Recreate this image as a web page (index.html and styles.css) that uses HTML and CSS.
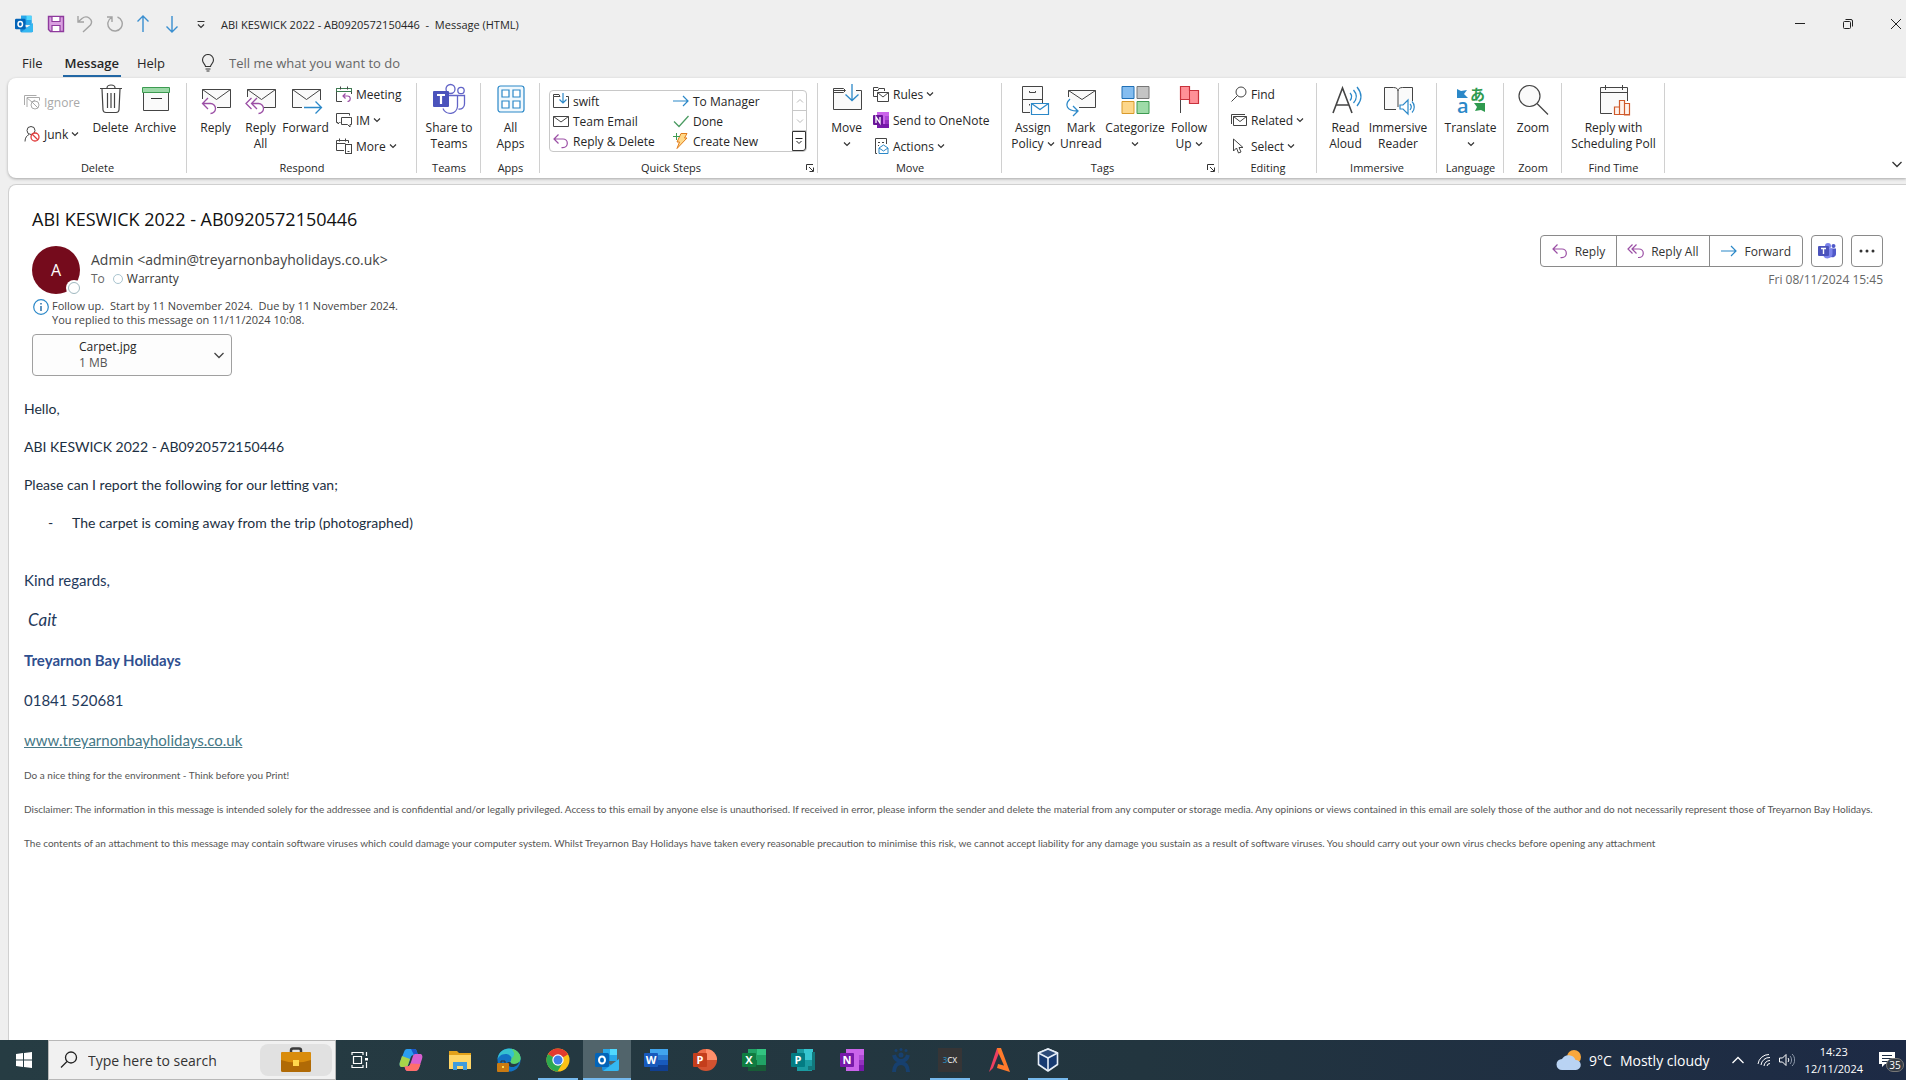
FILE: index.html
```html
<!DOCTYPE html>
<html lang="en">
<head>
    <meta charset="UTF-8">
    <meta name="viewport" content="width=device-width, initial-scale=1.0">
    <link rel="stylesheet" href="styles.css">
    <title>ABI KESWICK 2022 - AB0920572150446 - Message (HTML)</title>
</head>
<body>
    <!-- shared icons -->
    <svg class="sprite" aria-hidden="true">
        <symbol id="chev" viewBox="0 0 8 8"><path d="M1 2.5l3 3 3-3" fill="none" stroke="#333" stroke-width="1.2"/></symbol>
        <symbol id="reply" viewBox="0 0 16 16"><path d="M5.500 1.500L1 6l4.500 4.500M1 6h9a4.300 4.300 0 0 1 0 8.600H8.500" fill="none" stroke="#9b4fa5" stroke-width="1.200"/></symbol>
        <symbol id="replyall" viewBox="0 0 16 16"><path d="M4.500 1.500L0 6l4.500 4.500M8.500 1.500L4 6l4.500 4.500M4 6h7a4.200 4.200 0 0 1 0 8.500h-1" fill="none" stroke="#9b4fa5" stroke-width="1.200"/></symbol>
        <symbol id="arrow" viewBox="0 0 16 16"><path d="M0 8h15M10 3l5 5-5 5" fill="none" stroke="#2b88c8" stroke-width="1.200"/></symbol>
        <symbol id="launch" viewBox="0 0 8 8"><path d="M.5 6V.5H7M3 3l4 4M7.500 3.500v4h-4" fill="none" stroke="#333"/></symbol>
        <symbol id="outlook" viewBox="0 0 24 24"><path d="M8 1h14v12H8z" fill="#1490df"/><path d="M15 1h7v6h-7z" fill="#50d9ff"/><path d="M8 1h7v6H8z" fill="#28a8ea"/><path d="M15 7h7v6h-7z" fill="#28a8ea"/><path d="M7 11l9 6 8-6v10a2 2 0 0 1-2 2H9a2 2 0 0 1-2-2z" fill="#1a8fdd"/><path d="M24 11L8 23h14a2 2 0 0 0 2-2z" fill="#35b8f1"/><rect x="0" y="5" width="14" height="14" rx="1.500" fill="#0364b8"/><ellipse cx="7" cy="12" rx="3" ry="3.500" fill="none" stroke="#fff" stroke-width="2"/></symbol>
    </svg>

    <header class="titlebar">
        <div class="quick">
            <svg width="18" height="18"><use href="#outlook"/></svg>
            <button aria-label="Save"><svg width="18" height="18" viewBox="0 0 18 18"><path d="M1.500 1.500h15v15h-13l-2-2z" fill="#d9a0e0" stroke="#8e3a9d" stroke-width="1.400"/><path d="M5 1.500h8v5H5zM5 10.500h8v6H5z" fill="#fff" stroke="#8e3a9d" stroke-width="1.200"/></svg></button>
            <button aria-label="Undo"><svg width="18" height="18" viewBox="0 0 18 18"><path d="M2 1v6h6M2 7l4-3.500c5-4 12 1 8.500 6.500L7 17" fill="none" stroke="#a3a3a3" stroke-width="1.400"/></svg></button>
            <button aria-label="Redo"><svg width="18" height="18" viewBox="0 0 18 18"><path d="M2 2h5v5M6.500 2.500a7.200 7.200 0 1 0 6-.5" fill="none" stroke="#a3a3a3" stroke-width="1.400"/></svg></button>
            <button aria-label="Previous item"><svg width="18" height="18" viewBox="0 0 18 18"><path d="M9 17V1M3.500 6.500L9 1l5.500 5.500" fill="none" stroke="#3a8fd0" stroke-width="1.400"/></svg></button>
            <button aria-label="Next item"><svg width="18" height="18" viewBox="0 0 18 18"><path d="M9 1v16M3.500 11.500L9 17l5.500-5.500" fill="none" stroke="#3a8fd0" stroke-width="1.400"/></svg></button>
            <button aria-label="Customise toolbar"><svg width="18" height="18" viewBox="0 0 18 18"><path d="M5.500 6.500h7M6 9.500l3 3 3-3" fill="none" stroke="#333" stroke-width="1.200"/></svg></button>
        </div>
        <span class="window-title">ABI KESWICK 2022 - AB0920572150446&nbsp; -&nbsp; Message (HTML)</span>
        <div class="window-buttons">
            <button aria-label="Minimise"><svg width="12" height="12" viewBox="0 0 12 12"><path d="M1 5.500h10" stroke="#222"/></svg></button>
            <button aria-label="Restore"><svg width="12" height="12" viewBox="0 0 12 12" fill="none" stroke="#222"><rect x="1.500" y="3.500" width="7" height="7" rx="1"/><path d="M3.500 1.500H9a1.500 1.500 0 0 1 1.500 1.500v5.500"/></svg></button>
            <button aria-label="Close"><svg width="12" height="12" viewBox="0 0 12 12"><path d="M1 1l10 10M11 1L1 11" stroke="#222"/></svg></button>
        </div>
    </header>

    <nav class="tabs">
        <button>File</button>
        <button class="active">Message</button>
        <button>Help</button>
        <label for="tellme" aria-label="Tell me what you want to do"><svg width="14" height="18" viewBox="0 0 14 18"><path d="M4.500 12.500c0-2-3-3-3-6.500a5.500 5.500 0 0 1 11 0c0 3.500-3 4.500-3 6.500zM4.500 15h5M5.500 17h3" fill="none" stroke="#333" stroke-width="1.100"/></svg></label>
        <input type="text" id="tellme" placeholder="Tell me what you want to do">
    </nav>

    <section class="ribbon">
        <div class="group delete">
            <div class="tools">
                <div class="stack two">
                    <button disabled><svg width="16" height="16" viewBox="0 0 16 16" fill="none" stroke="#aaa"><path d="M.5 11V1.500h12M3 13V3.500h12.500v3"/><path d="M3 4l5 4 3-2"/><circle cx="11" cy="11" r="4"/><path d="M8 8l6 6"/></svg>Ignore</button>
                    <button><svg width="16" height="16" viewBox="0 0 16 16" fill="none" stroke="#444"><circle cx="7" cy="4.500" r="4"/><path d="M1 15.500c0-4 2-6 4-7"/><circle cx="11" cy="11" r="4" fill="#fff" stroke="#e03c3c" stroke-width="1.300"/><path d="M8 8l6 6" stroke="#e03c3c" stroke-width="1.300"/></svg>Junk<svg class="chev"><use href="#chev"/></svg></button>
                </div>
                <button class="big"><svg viewBox="0 0 32 32" fill="none" stroke="#444" stroke-width="1.200"><path d="M5 5.500h22M12 5c0-4 8-4 8 0M7 6l1 21a3 3 0 0 0 3 2.500h10a3 3 0 0 0 3-2.500l1-21M12.500 10v15M16 10v15M19.500 10v15"/></svg>Delete</button>
                <button class="big"><svg viewBox="0 0 32 32"><path d="M3.500 9h25v18.500h-25z" fill="#fafafa" stroke="#444"/><path d="M2.500 4.500h27v5h-27z" fill="#9bd8a7" stroke="#3d9b51"/><path d="M11 15.500h11" stroke="#333"/></svg>Archive</button>
            </div>
            <h2>Delete</h2>
        </div>
        <div class="group respond">
            <div class="tools">
                <button class="big"><svg viewBox="0 0 32 32"><path d="M2.500 16V6.500h28v18H17" fill="#fafafa" stroke="#444"/><path d="M2.500 6.500l14 10 14-10" fill="none" stroke="#444"/><path d="M8 15l-5.500 5.500L8 26M2.500 20.500h8a5 5 0 0 1 0 10" fill="none" stroke="#9b4fa5" stroke-width="1.300"/></svg>Reply</button>
                <button class="big"><svg viewBox="0 0 32 32"><path d="M2.500 14V6.500h28v18H19" fill="#fafafa" stroke="#444"/><path d="M2.500 6.500l14 10 14-10" fill="none" stroke="#444"/><path d="M6.500 15L1 20.500 6.500 26M12 15l-5.500 5.500L12 26M6.500 20.500h7a5 5 0 0 1 0 10" fill="none" stroke="#9b4fa5" stroke-width="1.300"/></svg>Reply<br>All</button>
                <button class="big"><svg viewBox="0 0 32 32"><path d="M12 24.500H2.500v-18h28V17" fill="#fafafa" stroke="#444"/><path d="M2.500 6.500l14 10 14-10" fill="none" stroke="#444"/><path d="M14 24.500h17M25.500 18.500l6 6-6 6" fill="none" stroke="#2b88c8" stroke-width="1.300"/></svg>Forward</button>
                <div class="stack">
                    <button><svg width="16" height="16" viewBox="0 0 16 16" fill="none" stroke="#444"><path d="M6 15.500H.5v-13h15V8M.5 5.500h15" /><path d="M.5 2.500h15v3H.5z" stroke="#3d7b51"/><path d="M4.500.5v3M11.500.5v3"/><path d="M9.500 7.500L7 10l2.500 2.500M7 10h4.500a2.700 2.700 0 0 1 0 5.500" stroke="#9b4fa5" stroke-width="1.200"/></svg>Meeting</button>
                    <button><svg width="16" height="16" viewBox="0 0 16 16" fill="none" stroke="#444"><path d="M4.500 10.500H3.500L2 12v-1.500H.5v-9h13v2"/><path d="M5.500 5.500h10v7H14V15l-2.500-2.500h-6z" fill="#fff"/></svg>IM<svg class="chev"><use href="#chev"/></svg></button>
                    <button><svg width="16" height="16" viewBox="0 0 16 16" fill="none" stroke="#444"><path d="M8 12.500H.5v-10h12V5M.5 5.500h9M3.500.5v3M9.500.5v3"/><rect x="9.500" y="6.500" width="6" height="9" fill="#fff"/><path d="M11.500 13.500h2"/></svg>More<svg class="chev"><use href="#chev"/></svg></button>
                </div>
            </div>
            <h2>Respond</h2>
        </div>
        <div class="group teams">
            <div class="tools">
                <button class="big"><svg viewBox="0 0 32 32" fill="none" stroke="#6264c7" stroke-width="1.300"><circle cx="17.500" cy="6" r="4.500"/><circle cx="28" cy="7.500" r="3.200"/><path d="M16 12.500h8.500v11a7.500 7.500 0 0 1-14.500 2M24.500 12.500h7v8.500a5 5 0 0 1-6 5"/><rect x="0" y="8" width="16" height="16" rx="1" fill="#4b53bc" stroke="none"/><path d="M4 12h8M8 12v9" stroke="#fff" stroke-width="2.200"/></svg>Share to<br>Teams</button>
            </div>
            <h2>Teams</h2>
        </div>
        <div class="group apps">
            <div class="tools">
                <button class="big"><svg viewBox="0 0 32 32" fill="none" stroke="#2b88c8" stroke-width="1.200"><rect x="3" y="3" width="26" height="26" rx="2.500" fill="#f0f8fd"/><path d="M7 7h7v7H7zM18 7h7v7h-7zM7 18h7v7H7zM18 18h7v7h-7z" fill="#fff"/></svg>All<br>Apps</button>
            </div>
            <h2>Apps</h2>
        </div>
        <div class="group steps">
            <div class="tools">
                <div class="gallery">
                    <div class="gallery-items">
                        <button><svg width="16" height="16" viewBox="0 0 16 16" fill="none" stroke="#444"><path d="M7 3.500H.5v11h15v-11H13M.5 3.500v-2H6l1 2"/><path d="M10 0v9.500M6.500 6.500L10 10l3.500-3.500" stroke="#2b88c8" stroke-width="1.200"/></svg>swift</button>
                        <button><svg width="16" height="16"><use href="#arrow"/></svg>To Manager</button>
                        <button><svg width="16" height="16" viewBox="0 0 16 16" fill="none" stroke="#444"><path d="M.5 3.500h15v10H.5zM.5 3.500L8 9l7.500-5.500"/></svg>Team Email</button>
                        <button><svg width="16" height="16" viewBox="0 0 16 16"><path d="M1 8.500l5 5L15.500 3" fill="none" stroke="#4b9b62" stroke-width="1.300"/></svg>Done</button>
                        <button><svg width="16" height="16"><use href="#reply"/></svg>Reply &amp; Delete</button>
                        <button><svg width="16" height="16" viewBox="0 0 16 16"><path d="M8 .5h6L11.500 5H14L4 15.500 6.500 9H4z" fill="#ffd98a" stroke="#e07b1a"/><path d="M3.500 0v7M0 3.500h7" stroke="#3d9b51"/></svg>Create New</button>
                    </div>
                    <div class="gallery-scroll">
                        <button disabled aria-label="Row up"><svg width="8" height="8" viewBox="0 0 8 8"><path d="M1 5.500l3-3 3 3" fill="none" stroke="#bbb"/></svg></button>
                        <button disabled aria-label="Row down"><svg width="8" height="8" viewBox="0 0 8 8"><path d="M1 2.500l3 3 3-3" fill="none" stroke="#bbb"/></svg></button>
                        <button class="more-steps" aria-label="More quick steps"><svg width="8" height="8" viewBox="0 0 8 8"><path d="M.5 1.500h7M1.500 4L4 6.500 6.500 4" fill="none" stroke="#222"/></svg></button>
                    </div>
                </div>
            </div>
            <h2>Quick Steps</h2>
            <button class="launcher" aria-label="Manage quick steps"><svg width="8" height="8"><use href="#launch"/></svg></button>
        </div>
        <div class="group move">
            <div class="tools">
                <button class="big"><svg viewBox="0 0 32 32" fill="none" stroke="#444"><path d="M14 7.500H2.500v19h28v-19H25M2.500 9.500v-4h10l2 2-2 2z" fill="#fafafa"/><path d="M21 1v16.500M14.500 11.500l6.500 6 6.500-6" stroke="#2b88c8" stroke-width="1.300"/></svg>Move<svg class="chev below"><use href="#chev"/></svg></button>
                <div class="stack">
                    <button><svg width="16" height="16" viewBox="0 0 16 16" fill="none" stroke="#444"><path d="M4 10.500H.5V1.500H5l1 1h5.500V5M.5 4.500H5l1-2"/><path d="M4.500 6.500h11v9h-11zM4.500 6.500L10 11l5.500-4.500" fill="#fff"/></svg>Rules<svg class="chev"><use href="#chev"/></svg></button>
                    <button><svg width="16" height="16" viewBox="0 0 16 16"><path d="M4 0h12v16H4z" fill="#ca64ea"/><path d="M12 4h4v4h-4z" fill="#ae4bd5"/><path d="M12 8h4v4h-4z" fill="#9332bf"/><path d="M4 12h12v4H4z" fill="#7719aa"/><rect y="3" width="10" height="10" rx="1" fill="#6a1599"/><path d="M3 11V5l4 6V5" fill="none" stroke="#fff" stroke-width="1.300"/></svg>Send to OneNote</button>
                    <button><svg width="16" height="16" viewBox="0 0 16 16" fill="none" stroke="#444"><path d="M4 15.500H2.500V.5h11V6M5 4.500h2M5 7.500h1M9 4.500h2"/><path d="M6 10l4.500-3 4.500 3v5.500H6z" fill="#fff" stroke="#2b88c8"/><path d="M6 10l4.500 3L15 10" stroke="#2b88c8"/></svg>Actions<svg class="chev"><use href="#chev"/></svg></button>
                </div>
            </div>
            <h2>Move</h2>
        </div>
        <div class="group tags">
            <div class="tools">
                <button class="big mid"><svg viewBox="0 0 32 32" fill="none" stroke="#444"><path d="M13 29.500H5.500v-26h20V20M5.500 16.500h20" fill="#fafafa"/><path d="M12.500 8v1.500h6V8M12.500 21v1.500"/><path d="M14.500 20.500h17v11h-17zM14.500 20.500l8.500 6 8.500-6" fill="#fff" stroke="#2b88c8" stroke-width="1.200"/></svg><span>Assign<br>Policy<svg class="chev"><use href="#chev"/></svg></span></button>
                <button class="big mid"><svg viewBox="0 0 32 32" fill="none" stroke="#444"><path d="M3.500 14V7.500h27v17H14" fill="#fafafa"/><path d="M3.500 7.500l13.500 9 13.500-9"/><path d="M5 16c-6 6-3 12 7 12M8 23l5 5-5 5" stroke="#2b88c8" stroke-width="1.300"/></svg>Mark<br>Unread</button>
                <button class="big cat"><svg viewBox="0 0 32 32"><path d="M3 3.500h12v12H3z" fill="#84bdf0" stroke="#1f6fb5"/><path d="M18 3.500h12v12H18z" fill="#c4c4c4" stroke="#777"/><path d="M3 18.500h12v12H3z" fill="#fdd78b" stroke="#d99a2b"/><path d="M18 18.500h12v12H18z" fill="#9edba8" stroke="#3d9b51"/></svg>Categorize<svg class="chev below"><use href="#chev"/></svg></button>
                <button class="big mid"><svg viewBox="0 0 32 32"><path d="M7.500 3.500V30" stroke="#444"/><path d="M7.500 3.500h9v4h9v13h-9v-4h-9z" fill="#ff9097" stroke="#c8323c" stroke-width="1.200"/><path d="M16.500 7.500v9" stroke="#c8323c"/></svg><span>Follow<br>Up<svg class="chev"><use href="#chev"/></svg></span></button>
            </div>
            <h2>Tags</h2>
            <button class="launcher" aria-label="Tag options"><svg width="8" height="8"><use href="#launch"/></svg></button>
        </div>
        <div class="group editing">
            <div class="tools">
                <div class="stack">
                    <button><svg width="16" height="16" viewBox="0 0 16 16" fill="none" stroke="#444"><circle cx="10" cy="6" r="5"/><path d="M6.500 9.500L.5 15.500"/></svg>Find</button>
                    <button><svg width="16" height="16" viewBox="0 0 16 16" fill="none" stroke="#444"><path d="M.5 12V2.500H14M2.500 4.500h13v9h-13zM2.500 4.500L9 9.500l6.500-5"/></svg>Related<svg class="chev"><use href="#chev"/></svg></button>
                    <button><svg width="16" height="16" viewBox="0 0 16 16" fill="none" stroke="#444"><path d="M2.500 1v12l3-3 2 5 2.500-1-2-4.500H12z"/></svg>Select<svg class="chev"><use href="#chev"/></svg></button>
                </div>
            </div>
            <h2>Editing</h2>
        </div>
        <div class="group immersive">
            <div class="tools">
                <button class="big"><svg viewBox="0 0 32 32" fill="none"><path d="M3 30L12.500 5 22 30M6 22h13" stroke="#444" stroke-width="1.600"/><path d="M20 10c2 2 2 5 0 7.500M23.500 7c3.500 4 3.500 9 0 13M27 4c5 6 5 13 0 19" stroke="#2b88c8" stroke-width="1.300"/></svg>Read<br>Aloud</button>
                <button class="big cat"><svg viewBox="0 0 32 32" fill="none" stroke="#444"><path d="M14 26.500H2.500v-22h9c3 0 4.500 1.500 4.500 3.500 0-2 1.500-3.500 4.500-3.500h10V18M16 8v16" fill="#fafafa"/><path d="M18 22h3l5-5v14l-5-5h-3z" fill="#fff" stroke="#2b88c8" stroke-width="1.200"/><path d="M28 21c1.500 1.500 1.500 4 0 6M30 18.500c3 3 3 8 0 11" stroke="#2b88c8" stroke-width="1.200"/></svg>Immersive<br>Reader</button>
            </div>
            <h2>Immersive</h2>
        </div>
        <div class="group language">
            <div class="tools">
                <button class="big"><svg viewBox="0 0 32 32"><path d="M2 6l4 2 6-1-3 4 4 4H2z" fill="#2b88c8"/><path d="M19 20h11v9l-4-2-6 1 2-4z" fill="#2f9a4f"/><text x="2" y="30" font-size="20" font-weight="600" fill="#2b88c8">a</text><text x="15" y="17" font-size="15" font-weight="600" fill="#2f9a4f">あ</text></svg>Translate<svg class="chev below"><use href="#chev"/></svg></button>
            </div>
            <h2>Language</h2>
        </div>
        <div class="group zoom">
            <div class="tools">
                <button class="big"><svg viewBox="0 0 32 32" fill="none" stroke="#444" stroke-width="1.200"><circle cx="12.500" cy="13" r="10.500" fill="#fafafa"/><path d="M20 20.500L31 31.500"/></svg>Zoom</button>
            </div>
            <h2>Zoom</h2>
        </div>
        <div class="group findtime">
            <div class="tools">
                <button class="big"><svg viewBox="0 0 32 32" fill="none" stroke="#444"><path d="M14 30.500H2.500v-26h27V18M2.500 9.500h27M7.500 2v5M24.500 2v5" fill="#fafafa"/><path d="M16.500 32v-8h5v8M21.500 32V17.500h5V32M26.500 32V20.500h5V32zM16.500 31.500h15" fill="#fff4ee" stroke="#d05a2b" stroke-width="1.200"/></svg>Reply with<br>Scheduling Poll</button>
            </div>
            <h2>Find Time</h2>
        </div>
        <button class="collapse" aria-label="Collapse ribbon"><svg width="12" height="12" viewBox="0 0 12 12"><path d="M1.500 4L6 8.500 10.500 4" fill="none" stroke="#333" stroke-width="1.300"/></svg></button>
    </section>

    <main class="message">
        <h1>ABI KESWICK 2022 - AB0920572150446</h1>
        <div class="message-head">
            <div class="avatar">A<span class="presence"></span></div>
            <div class="sender">
                <p class="from">Admin &lt;admin@treyarnonbayholidays.co.uk&gt;</p>
                <p class="to">To <span class="dot"></span><b>Warranty</b></p>
            </div>
            <div class="actions">
                <div class="action-row">
                    <div class="action-group">
                        <button><svg width="18" height="16"><use href="#reply"/></svg>Reply</button>
                        <button><svg width="18" height="16"><use href="#replyall"/></svg>Reply All</button>
                        <button><svg width="18" height="16"><use href="#arrow"/></svg>Forward</button>
                    </div>
                    <button class="square" aria-label="Share to Teams"><svg width="18" height="18" viewBox="0 0 18 18"><circle cx="10" cy="4" r="3" fill="#7b83eb"/><circle cx="15.500" cy="4" r="2" fill="#5059c9"/><path d="M12 6.500h6V12a3.500 3.500 0 0 1-5 3z" fill="#5059c9"/><path d="M5 6.500h9.500V12a5 5 0 0 1-9.500 1.500z" fill="#7b83eb"/><rect x="0" y="4" width="11" height="10" rx="1" fill="#4b53bc"/><path d="M3 6.500h5M5.500 6.500V12" stroke="#fff" stroke-width="1.400"/></svg></button>
                    <button class="square" aria-label="More actions"><svg width="18" height="18" viewBox="0 0 18 18" fill="#333"><circle cx="3" cy="9" r="1.500"/><circle cx="9" cy="9" r="1.500"/><circle cx="15" cy="9" r="1.500"/></svg></button>
                </div>
                <time datetime="2024-11-08T15:45">Fri 08/11/2024 15:45</time>
            </div>
        </div>
        <div class="info">
            <svg width="16" height="16" viewBox="0 0 16 16"><circle cx="8" cy="8" r="7.300" fill="none" stroke="#2b88c8" stroke-width="1.200"/><path d="M8 7v5M8 4v1.500" stroke="#2b6fa8" stroke-width="1.500"/></svg>
            <p>Follow up.&nbsp; Start by 11 November 2024.&nbsp; Due by 11 November 2024.<br>You replied to this message on 11/11/2024 10:08.</p>
        </div>
        <button class="attachment">
            <span>Carpet.jpg<small>1 MB</small></span>
            <svg width="12" height="12" viewBox="0 0 12 12"><path d="M1.500 4L6 8.500 10.500 4" fill="none" stroke="#444" stroke-width="1.300"/></svg>
        </button>

        <article class="mail">
            <p>Hello,</p>
            <p>ABI KESWICK 2022 - AB0920572150446</p>
            <p>Please can I report the following for our letting van;</p>
            <ul>
                <li>The carpet is coming away from the trip (photographed)</li>
            </ul>
            <div class="signature">
                <p>Kind regards,</p>
                <p class="name">Cait</p>
                <p class="company">Treyarnon Bay Holidays</p>
                <p>01841 520681</p>
                <p><a href="#">www.treyarnonbayholidays.co.uk</a></p>
            </div>
            <div class="disclaimer">
                <p>Do a nice thing for the environment - Think before you Print!</p>
                <p>Disclaimer: The information in this message is intended solely for the addressee and is confidential and/or legally privileged. Access to this email by anyone else is unauthorised. If received in error, please inform the sender and delete the material from any computer or storage media. Any opinions or views contained in this email are solely those of the author and do not necessarily represent those of Treyarnon Bay Holidays.</p>
                <p>The contents of an attachment to this message may contain software viruses which could damage your computer system. Whilst Treyarnon Bay Holidays have taken every reasonable precaution to minimise this risk, we cannot accept liability for any damage you sustain as a result of software viruses. You should carry out your own virus checks before opening any attachment</p>
            </div>
        </article>
    </main>

    <footer class="taskbar">
        <button class="start" aria-label="Start"><svg width="16" height="16" viewBox="0 0 16 16" fill="#fff"><path d="M0 2l7-1v6.500H0zM8 1l8-1v7.500H8zM0 8.500h7V15l-7-1zM8 8.500h8V16l-8-1z"/></svg></button>
        <div class="search">
            <label for="search" aria-label="Search"><svg width="18" height="18" viewBox="0 0 18 18"><circle cx="11" cy="6.500" r="5.500" fill="none" stroke="#222" stroke-width="1.300"/><path d="M7 10.500l-6 6" stroke="#222" stroke-width="1.300"/></svg></label>
            <input type="text" id="search" placeholder="Type here to search">
            <span class="highlight"><svg width="30" height="26" viewBox="0 0 30 26"><path d="M10 6V3.500C10 2 11 1.500 12 1.500h6c1 0 2 .5 2 2V6" fill="none" stroke="#3b3b3b" stroke-width="2.500"/><rect y="5" width="30" height="20" rx="1.500" fill="#b06a06"/><path d="M0 6.500A1.500 1.500 0 0 1 1.500 5h27A1.500 1.500 0 0 1 30 6.500V13q-15 5-30 0z" fill="#d98c0c"/><rect x="12" y="13" width="6" height="6" fill="#ffd84d"/></svg></span>
        </div>
        <button class="taskview" aria-label="Task view"><svg width="18" height="18" viewBox="0 0 18 18" fill="none" stroke="#fff" stroke-width="1.200"><path d="M1 4V1.500h11V4M1 14v2.500h11V14M2.500 5.500h8v7h-8zM15.500 1v4M15.500 11v6"/><path d="M14 7h3v2.500h-3z" fill="#fff" stroke="none"/></svg></button>
        <div class="pinned">
            <button aria-label="Copilot"><svg width="24" height="24" viewBox="0 0 24 24"><path d="M8 1h7c2 0 2.500 1 3 3l1 3h-4c-2 0-3 1-3.500 3L9 17c-.5 2-1.500 2-3 2H3c-2 0-3-2-2-5L5 4c.7-2 1.500-3 3-3z" fill="#2a9df0"/><path d="M1 14l2-6 8 3-2 6c-.5 2-1.500 2-3 2H3c-2 0-3-2-2-5z" fill="#a8d34a"/><path d="M12 1h3c2 0 2.500 1 3 3l1 3h-4z" fill="#1b54c9"/><path d="M16 23H9c-2 0-2.500-1-3-3l-.5-1.500H8c2 0 3-1 3.500-3L14 8c.5-1.500 1.500-2 3-2h4c2 0 3 2 2 5l-3 9c-.7 2-2 3-4 3z" fill="#d85fd0"/><path d="M16 23H9c-2 0-2.500-1-3-3l-.5-1.500H8c2 0 3-1 3.500-3l10 .5-1.500 4c-.7 2-2 3-4 3z" fill="#ff6f6a"/></svg></button>
            <button aria-label="File Explorer"><svg width="24" height="24" viewBox="0 0 24 24"><path d="M1 3h8l2 2h12v5H1z" fill="#e3a21a"/><path d="M1 7h22v14H1z" fill="#ffd667"/><path d="M5 22v-8h14v8h-4v-4H9v4z" fill="#3f9bdc"/></svg></button>
            <button aria-label="Edge"><svg width="24" height="24" viewBox="0 0 24 24"><circle cx="12" cy="12" r="11.500" fill="#1272c4"/><path d="M.5 12C1 4 7 .5 12 .5c7 0 11.500 5 11.500 9.500 0 4-3 6-6.500 6-2.500 0-3.500-1-3.500-2s1-1.500 1-3.500c0-2.500-2.500-4.500-6-4.500C4 6 1 9 .5 12z" fill="#35c1d0"/><path d="M14 .8c6 1 9.500 5 9.500 9.200 0 4-3 6-6.500 6-2.500 0-3.500-1-3.500-2s1-1.500 1-3.500C18 8 18 4 14 .8z" fill="#5bd36a"/><path d="M13.500 14c0 1 1 2 3.500 2 2.500 0 4.500-1 5.500-2.500-1 3-4 5.500-7 5.500-3 0-5-2-5-5z" fill="#263a43"/><rect x="0" y="15" width="12" height="9" rx="1" fill="#c97a12"/><path d="M4 15v-2h4v2" fill="none" stroke="#333"/><path d="M5 18h2v2H5z" fill="#ffd84d"/></svg></button>
            <button class="running" aria-label="Chrome"><svg width="24" height="24" viewBox="0 0 24 24"><circle cx="12" cy="12" r="11.500" fill="#fbc116"/><path d="M12 12L2 6.200A11.500 11.500 0 0 1 22 6.300z" fill="#e33b2e"/><path d="M12 6.300h10L12 12z" fill="#e33b2e"/><path d="M2 6.200A11.500 11.500 0 0 0 11.500 23.500L17 14.500 12 12z" fill="#2da94f"/><circle cx="12" cy="12" r="5.700" fill="#fff"/><circle cx="12" cy="12" r="4.500" fill="#3f7ee8"/></svg></button>
            <button class="running current" aria-label="Outlook"><svg width="24" height="24"><use href="#outlook"/></svg></button>
            <button aria-label="Word"><svg width="24" height="24" viewBox="0 0 24 24"><path d="M6 1h18v6H6z" fill="#41a5ee"/><path d="M6 7h18v5H6z" fill="#2b7cd3"/><path d="M6 12h18v5H6z" fill="#185abd"/><path d="M6 17h18v6H6z" fill="#103f91"/><rect y="5" width="14" height="14" rx="1" fill="#185abd"/><text x="7" y="16" class="letter">W</text></svg></button>
            <button aria-label="PowerPoint"><svg width="24" height="24" viewBox="0 0 24 24"><circle cx="13" cy="12" r="11" fill="#d35230"/><path d="M13 1a11 11 0 0 1 11 11H13z" fill="#ff8f6b"/><path d="M13 1v11H2A11 11 0 0 1 13 1z" fill="#ed6c47"/><rect y="5" width="14" height="14" rx="1" fill="#c43e1c"/><text x="7" y="16" class="letter">P</text></svg></button>
            <button aria-label="Excel"><svg width="24" height="24" viewBox="0 0 24 24"><path d="M6 1h18v22H6z" fill="#21a366"/><path d="M15 1h9v6h-9z" fill="#33c481"/><path d="M6 12h9v5H6z" fill="#107c41"/><path d="M6 17h18v6H6z" fill="#185c37"/><rect y="5" width="14" height="14" rx="1" fill="#107c41"/><text x="7" y="16" class="letter">X</text></svg></button>
            <button aria-label="Publisher"><svg width="24" height="24" viewBox="0 0 24 24"><path d="M6 1h15v22H6z" fill="#1a9ba1"/><path d="M13 1h9v11h-9z" fill="#37c6d0"/><path d="M21 4h3v18h-7v-4h4z" fill="#12787c"/><rect y="5" width="14" height="14" rx="1" fill="#037c83"/><text x="7" y="16" class="letter">P</text></svg></button>
            <button aria-label="OneNote"><svg width="24" height="24" viewBox="0 0 24 24"><path d="M6 1h18v22H6z" fill="#ca64ea"/><path d="M19 7h5v5h-5z" fill="#ae4bd5"/><path d="M19 12h5v5h-5z" fill="#9332bf"/><path d="M19 17h5v6h-5z" fill="#7719aa"/><rect y="5" width="14" height="14" rx="1" fill="#7719aa"/><text x="7" y="16" class="letter">N</text></svg></button>
            <button aria-label="Support tool"><svg width="24" height="24" viewBox="0 0 24 24" fill="none" stroke="#17406f" stroke-width="4"><path d="M5 7c1 4 3 6 7 6s6-2 7-6M5 24c0-6 3-9 7-9s7 3 7 9"/><g fill="#17406f" stroke="none"><circle cx="12" cy="7" r="2.500"/><circle cx="7" cy="2.500" r="1.500"/><circle cx="12" cy="1.500" r="1.500"/><circle cx="17" cy="2.500" r="1.500"/></g></svg></button>
            <button class="running" aria-label="3CX"><svg width="24" height="24" viewBox="0 0 24 24"><rect width="24" height="24" fill="#363536"/><text x="12" y="15" class="cx"><tspan fill="#2d7fa8">3</tspan>CX</text></svg></button>
            <button aria-label="A"><svg width="24" height="24" viewBox="0 0 24 24"><path d="M2 24L10 0h4L6 20z" fill="#ee3f60"/><path d="M10 0h4l9 24-13-4 1-4 6 1.500L11 4z" fill="#ff7a2b"/></svg></button>
            <button class="running" aria-label="VirtualBox"><svg width="24" height="24" viewBox="0 0 24 24" stroke="#e6eef7" stroke-width="1.600" stroke-linejoin="round"><path d="M2.500 5L12 1l9.500 4v11.500L12 23l-9.500-6.500z" fill="#173a70"/><path d="M2.500 5L12 10l9.500-5L12 1z" fill="#2c4a78"/><path d="M12 10v13" fill="none"/></svg></button>
        </div>
        <div class="tray">
            <svg width="26" height="22" viewBox="0 0 26 22"><circle cx="18" cy="8" r="7" fill="#f9a73b"/><path d="M6 21a5.500 5.500 0 0 1 0-11 7.500 7.500 0 0 1 13.500 1A5 5 0 0 1 20 21z" fill="#b9d3f3"/></svg>
            <span class="temp">9°C</span>
            <span class="weather">Mostly cloudy</span>
            <button aria-label="Show hidden icons"><svg width="14" height="14" viewBox="0 0 14 14"><path d="M1.500 10L7 4.500l5.500 5.500" fill="none" stroke="#fff" stroke-width="1.300"/></svg></button>
            <svg width="14" height="14" viewBox="0 0 14 14" fill="none" stroke="#fff"><path d="M1 11A11 11 0 0 1 12 1.500M4 12A8.500 8.500 0 0 1 13 4.500M7 13a6 6 0 0 1 6-5.500M10 13a3 3 0 0 1 3-2.500"/></svg>
            <svg width="16" height="14" viewBox="0 0 16 14" fill="none" stroke="#fff"><path d="M.5 5h3L7 1.500v11L3.500 9h-3zM9 5c1 1 1 3 0 4"/><path d="M11 3c2 2 2 6 0 8M13 1c3.500 3 3.500 9 0 12" stroke="#8f9aab"/></svg>
            <time datetime="2024-11-12T14:23">14:23<br>12/11/2024</time>
            <button class="notify" aria-label="Notifications"><svg width="16" height="16" viewBox="0 0 16 16"><path d="M0 0h16v12H6l-3 3v-3H0z" fill="#fff"/><path d="M3 3.500h10M3 6.500h10M3 9.500h7" stroke="#1d2d45"/></svg><span>35</span></button>
        </div>
    </footer>
</body>
</html>
```
FILE: styles.css
```css
* {
    margin: 0;
    padding: 0;
    box-sizing: border-box;
}

body {
    min-height: 100vh;
    display: flex;
    flex-direction: column;
    background-color: #efefef;
    font-family: "Open Sans", "Noto Sans", "Noto Sans CJK JP", sans-serif;
    font-size: 12px;
    color: #262626;
    overflow-x: hidden;
}

button,
input {
    font: inherit;
    color: inherit;
    background: none;
    border: none;
    outline: none;
}

svg {
    flex: none;
}

.sprite {
    position: absolute;
    width: 0;
    height: 0;
}

/* title bar */
.titlebar {
    display: flex;
    align-items: center;
    height: 48px;
    padding-left: 15px;
}

.quick {
    display: flex;
    align-items: center;
    gap: 11px;
}

.quick > svg {
    margin-right: 3px;
}

.quick svg,
.window-buttons svg {
    display: block;
}

.window-title {
    margin-left: 11px;
    font-size: 11px;
}

.window-buttons {
    display: flex;
    gap: 36px;
    margin-left: auto;
    padding-right: 4px;
}

/* tabs */
.tabs {
    display: flex;
    align-items: center;
    height: 30px;
    padding-left: 14px;
    font-size: 13px;
}

.tabs button {
    height: 28px;
    line-height: 28px;
    padding: 0 8px;
}

.tabs .active {
    margin: 0 8px 0 12px;
    padding: 0 2px;
    font-weight: 600;
    background: linear-gradient(#2368a5, #2368a5) bottom / 100% 2px no-repeat;
}

.tabs label {
    display: flex;
    margin: 0 14px 0 28px;
}

.tabs input {
    width: 240px;
}

.tabs input::placeholder {
    color: #666;
    opacity: 1;
}

/* ribbon */
.ribbon {
    display: flex;
    height: 100px;
    margin-left: 8px;
    background-color: #fff;
    border-radius: 8px 0 0 8px;
    box-shadow: 0 1px 3px rgba(0, 0, 0, 0.3);
}

.group {
    position: relative;
    display: flex;
    flex-direction: column;
    flex: none;
    padding-top: 3px;
    background: linear-gradient(#d0d0d0, #d0d0d0) right 5px / 1px 90px no-repeat;
}

.group h2 {
    font-size: 11px;
    font-weight: normal;
    line-height: 16px;
    text-align: center;
}

.tools {
    display: flex;
    height: 79px;
}

.big {
    display: flex;
    flex-direction: column;
    align-items: center;
    flex: none;
    width: 45px;
    padding-top: 2px;
    line-height: 16px;
    white-space: nowrap;
}

.big > svg:first-child {
    width: 32px;
    height: 32px;
    margin-bottom: 5px;
    overflow: visible;
}

.chev {
    width: 8px;
    height: 8px;
    margin-left: 3px;
}

.below {
    margin: 4px 0;
}

.stack {
    display: flex;
    flex-direction: column;
}

.stack button {
    display: flex;
    align-items: center;
    height: 26px;
    white-space: nowrap;
}

.stack button > svg:first-child {
    margin-right: 4px;
}

.stack.two {
    width: 64px;
    gap: 6px;
    padding-top: 8px;
}

.stack button:disabled {
    color: #a8a8a8;
}

.delete {
    width: 179px;
}

.delete .tools {
    padding-left: 16px;
}

.respond {
    width: 230px;
}

.respond .tools {
    padding-left: 6px;
}

.respond .stack {
    margin-left: 8px;
}

.teams {
    width: 64px;
}

.apps {
    width: 59px;
}

.teams .tools,
.apps .tools,
.language .tools,
.zoom .tools,
.findtime .tools {
    justify-content: center;
}

.steps {
    width: 278px;
}

.steps .tools {
    padding-left: 9px;
}

.steps h2,
.tags h2 {
    padding-right: 16px;
}

.gallery {
    display: flex;
    width: 258px;
    height: 62px;
    margin-top: 9px;
    border: 1px solid #c8c8c8;
    border-radius: 4px;
}

.gallery-items {
    flex: 1;
    display: grid;
    grid-template-columns: 120px 1fr;
    grid-template-rows: repeat(3, 20px);
    padding-left: 3px;
}

.gallery-items button {
    display: flex;
    align-items: center;
    gap: 4px;
    white-space: nowrap;
}

.gallery-scroll {
    display: grid;
    width: 14px;
    grid-template-rows: 20px 20px 20px;
}

.gallery-scroll button {
    display: flex;
    align-items: center;
    justify-content: center;
    border-left: 1px solid #c8c8c8;
    border-bottom: 1px solid #c8c8c8;
}

.gallery-scroll .more-steps {
    border: 1px solid #333;
    border-radius: 0 0 3px 0;
}

.launcher {
    position: absolute;
    right: 4px;
    bottom: 6px;
    line-height: 0;
}

.move {
    width: 184px;
}

.move .tools {
    padding-left: 6px;
}

.move .stack {
    margin-left: 4px;
}

.tags {
    width: 217px;
}

.tags .tools {
    padding-left: 7px;
}

.mid {
    width: 48px;
}

.cat {
    width: 60px;
}

.editing {
    width: 98px;
}

.editing .tools {
    padding-left: 12px;
}

.immersive {
    width: 120px;
}

.immersive .tools {
    padding-left: 6px;
}

.language {
    width: 67px;
}

.zoom {
    width: 58px;
}

.findtime {
    width: 103px;
}

.findtime .big {
    width: 96px;
}

.collapse {
    align-self: flex-end;
    margin: 0 3px 8px auto;
    line-height: 0;
}

/* message */
.message {
    flex: 1;
    margin: 6px 0 0 8px;
    padding: 22px 23px 0 16px;
    background-color: #fff;
    border: 1px solid #d0d0d0;
    border-width: 1px 0 0 1px;
    border-radius: 8px 0 0 0;
}

.message h1 {
    padding-left: 7px;
    font-size: 18px;
    font-weight: normal;
    line-height: 24px;
    color: #111;
}

.message-head {
    display: flex;
    padding-left: 7px;
}

.avatar {
    position: relative;
    width: 48px;
    height: 48px;
    margin-top: 15px;
    border-radius: 50%;
    background-color: #750b1c;
    color: #fff;
    font-size: 16px;
    line-height: 48px;
    text-align: center;
}

.presence {
    position: absolute;
    right: 0;
    bottom: 0;
    width: 12px;
    height: 12px;
    border: 1px solid #9fb8bf;
    border-radius: 50%;
    background-color: #fff;
    box-shadow: 0 0 0 2px #fff;
}

.sender {
    margin: 18px 0 0 11px;
}

.from {
    font-size: 14px;
    line-height: 22px;
    color: #444;
}

.to {
    display: flex;
    align-items: center;
    line-height: 16px;
    color: #666;
}

.to b {
    font-weight: normal;
    color: #333;
}

.dot {
    width: 10px;
    height: 10px;
    margin: 0 4px 0 8px;
    border: 1px solid #a9c4cf;
    border-radius: 50%;
}

.actions {
    margin: 4px 0 0 auto;
    text-align: right;
    color: #666;
}

.action-row {
    display: flex;
    gap: 8px;
    margin-bottom: 4px;
    color: #333;
}

.action-group {
    display: flex;
    border: 1px solid #8a8a8a;
    border-radius: 4px;
}

.action-group button {
    display: flex;
    align-items: center;
    gap: 6px;
    height: 30px;
    padding: 0 11px 0 10px;
}

.action-group button + button {
    border-left: 1px solid #8a8a8a;
}

.square {
    display: flex;
    align-items: center;
    justify-content: center;
    width: 32px;
    height: 32px;
    border: 1px solid #8a8a8a;
    border-radius: 4px;
}

.info {
    display: flex;
    gap: 3px;
    padding: 5px 0 0 8px;
    font-size: 11px;
    line-height: 14px;
    color: #444;
}

.attachment {
    display: flex;
    align-items: center;
    justify-content: space-between;
    width: 200px;
    height: 42px;
    margin: 7px 0 0 7px;
    padding: 0 6px 0 46px;
    border: 1px solid #a0a0a0;
    border-radius: 4px;
    background-color: #fdfdfd;
    line-height: 16px;
    text-align: left;
}

.attachment small {
    display: block;
    font-size: 12px;
    color: #555;
}

/* mail body */
.mail {
    padding-top: 24px;
    font-family: Lato, "Open Sans", sans-serif;
    font-size: 14px;
    line-height: 18px;
    color: #1c2f42;
}

.mail p,
.mail ul {
    margin: 0 0 20px -1px;
}

.mail ul {
    list-style: none;
}

.mail li {
    display: flex;
}

.mail li::before {
    content: "-";
    width: 24px;
    margin-left: 24px;
}

.signature {
    padding-top: 18px;
    font-size: 15px;
    line-height: 20px;
    color: #1f3a5c;
}

.mail .name {
    padding-left: 4px;
    font-size: 17px;
    font-style: italic;
}

.company {
    font-weight: bold;
    color: #2f4f8f;
}

.signature a {
    color: #467886;
}

.disclaimer {
    font-size: 10px;
    line-height: 14px;
    color: #555;
}

.mail .signature p:last-child {
    margin-bottom: 18px;
}

/* taskbar */
.taskbar {
    display: flex;
    height: 40px;
    background: linear-gradient(90deg, #263c43, #22353f 60%, #1d2a45);
    color: #fff;
}

.start {
    width: 48px;
    line-height: 0;
}

.search {
    display: flex;
    align-items: center;
    width: 288px;
    padding: 0 3px 0 11px;
    border: 1px solid #b8b8b8;
    background-color: #f1f1f1;
    color: #222;
}

.search label {
    display: flex;
}

.search input {
    flex: 1;
    min-width: 0;
    margin-left: 10px;
    font-size: 14px;
}

.search input::placeholder {
    color: #333;
    opacity: 1;
}

.highlight {
    display: flex;
    align-items: center;
    justify-content: center;
    width: 72px;
    height: 32px;
    border-radius: 8px;
    background-color: #e1e1e1;
}

.taskview {
    width: 48px;
    line-height: 0;
}

.pinned {
    display: flex;
    gap: 1px;
    padding-left: 3px;
}

.pinned button {
    display: flex;
    align-items: center;
    justify-content: center;
    width: 48px;
}

.pinned .running {
    background: linear-gradient(#76b9ed, #76b9ed) bottom / 40px 2px no-repeat;
}

.pinned .current {
    background-color: #51646b;
    background-size: 100% 2px;
}

.letter {
    font-size: 11px;
    font-weight: bold;
    fill: #fff;
    text-anchor: middle;
}

.cx {
    font-size: 8px;
    font-weight: 600;
    fill: #ddd;
    text-anchor: middle;
}

.tray {
    display: flex;
    align-items: center;
    margin-left: auto;
    padding-right: 2px;
    font-size: 14px;
}

.temp {
    margin: 0 8px 0 7px;
}

.weather {
    margin-right: 21px;
}

.tray button {
    line-height: 0;
}

.tray > button + svg {
    margin: 0 8px 0 12px;
}

.tray time {
    margin: 0 16px 0 10px;
    font-size: 11px;
    line-height: 17px;
    text-align: center;
}

.notify {
    position: relative;
    width: 25px;
    height: 24px;
    text-align: left;
}

.notify span {
    position: absolute;
    right: 0;
    bottom: 0;
    width: 18px;
    height: 14px;
    border: 1px solid #777;
    border-radius: 8px;
    background-color: #333a44;
    font-size: 10px;
    line-height: 12px;
    text-align: center;
}
```
